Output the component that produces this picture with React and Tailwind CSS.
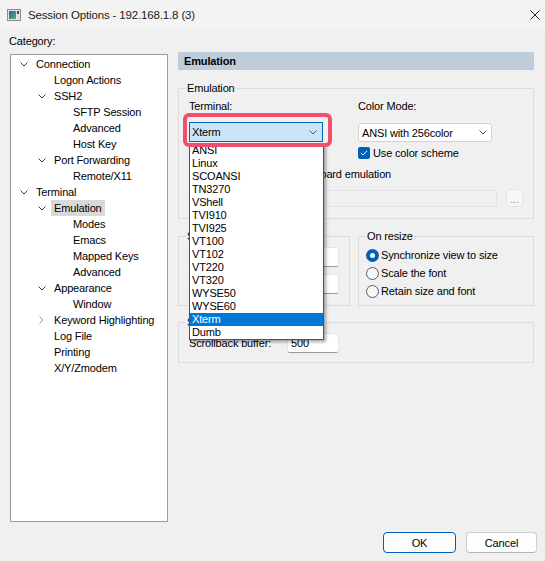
import React from "react";

const tree = [
  { t: "Connection", l: 0, c: "down" },
  { t: "Logon Actions", l: 1 },
  { t: "SSH2", l: 1, c: "down" },
  { t: "SFTP Session", l: 2 },
  { t: "Advanced", l: 2 },
  { t: "Host Key", l: 2 },
  { t: "Port Forwarding", l: 1, c: "down" },
  { t: "Remote/X11", l: 2 },
  { t: "Terminal", l: 0, c: "down" },
  { t: "Emulation", l: 1, c: "down", sel: true },
  { t: "Modes", l: 2 },
  { t: "Emacs", l: 2 },
  { t: "Mapped Keys", l: 2 },
  { t: "Advanced", l: 2 },
  { t: "Appearance", l: 1, c: "down" },
  { t: "Window", l: 2 },
  { t: "Keyword Highlighting", l: 1, c: "right" },
  { t: "Log File", l: 1 },
  { t: "Printing", l: 1 },
  { t: "X/Y/Zmodem", l: 1 },
];

const indent = ["w-0", "w-[18px]", "w-[37px]"];

const terms = [
  "ANSI", "Linux", "SCOANSI", "TN3270", "VShell", "TVI910", "TVI925", "VT100",
  "VT102", "VT220", "VT320", "WYSE50", "WYSE60", "Xterm", "Dumb",
];

function ChevDown({ color = "#444" }) {
  return (
    <svg width="8" height="5" viewBox="0 0 8 5" className="block">
      <path d="M0.5 0.5 L4 4 L7.5 0.5" stroke={color} strokeWidth="1" fill="none" />
    </svg>
  );
}

function ChevRight() {
  return (
    <svg width="5" height="8" viewBox="0 0 5 8" className="block">
      <path d="M0.5 0.5 L4 4 L0.5 7.5" stroke="#9a9a9a" strokeWidth="1" fill="none" />
    </svg>
  );
}

function Check() {
  return (
    <div className="w-[12px] h-[12px] rounded-[2px] bg-[#005fb8] flex items-center justify-center">
      <svg width="8" height="6" viewBox="0 0 8 6">
        <path d="M0.8 3 L3 5 L7.2 0.8" stroke="#fff" strokeWidth="1" fill="none" />
      </svg>
    </div>
  );
}

function Radio({ on }) {
  return on ? (
    <div className="w-[13px] h-[13px] rounded-full bg-[#005fb8] flex items-center justify-center">
      <div className="w-[5px] h-[5px] rounded-full bg-white" />
    </div>
  ) : (
    <div className="w-[13px] h-[13px] rounded-full border border-[#5c5c5c] bg-[#f7f7f7]" />
  );
}

function Input({ value }) {
  return (
    <div className="w-[52px] h-[20px] bg-white border border-[#e5e5e5] border-b-[#9a9a9a] rounded-[3px] pl-[3px] leading-[18px]">
      {value}
    </div>
  );
}

export default function App() {
  return (
    <div className="w-[545px] h-[561px] bg-[#f0f0f0] text-black text-[11px] leading-[14px] tracking-[-0.15px] font-['Liberation_Sans',Arial,sans-serif] overflow-hidden">
      {/* Title bar */}
      <div className="h-[30px] bg-[#f3f3f3] flex items-center pl-[7px] pr-[5px]">
        <svg width="14" height="12" viewBox="0 0 14 12" className="block">
          <defs>
            <linearGradient id="g" x1="0" y1="0" x2="1" y2="1">
              <stop offset="0" stopColor="#2a5f98" />
              <stop offset="1" stopColor="#5cb07a" />
            </linearGradient>
          </defs>
          <rect x="0.5" y="0.5" width="13" height="11" fill="#e4e4e4" stroke="#8c8c8c" />
          <rect x="2" y="2" width="7" height="8" fill="url(#g)" />
          <rect x="10" y="2" width="2" height="3" fill="#4a4a4a" />
        </svg>
        <div className="ml-[7px] text-[11.5px] text-[#1b1b1b]">Session Options - 192.168.1.8 (3)</div>
        <div className="ml-auto w-[10px] h-[10px]">
          <svg width="10" height="10" viewBox="0 0 10 10" className="block">
            <path d="M0.5 0.5 L9.5 9.5 M9.5 0.5 L0.5 9.5" stroke="#222" strokeWidth="1" />
          </svg>
        </div>
      </div>

      {/* Body */}
      <div className="pt-[4px] flex">
        {/* Left column */}
        <div className="ml-[10px] w-[158px] flex flex-col">
          <div className="h-[14px] -ml-[1px]">Category:</div>
          <div className="mt-[6px] h-[468px] bg-white border border-[#9c9c9c] pt-[1px]">
            {tree.map((r, i) => (
              <div key={i} className="flex items-center h-[16px]">
                <div className={`${indent[r.l]} shrink-0`} />
                <div className="w-[22px] shrink-0 flex items-center">
                  {r.c === "down" && (
                    <div className="ml-[9px]">
                      <ChevDown color="#3a3a3a" />
                    </div>
                  )}
                  {r.c === "right" && (
                    <div className="ml-[10px]">
                      <ChevRight />
                    </div>
                  )}
                </div>
                <div className={`px-[3px] leading-[16px] whitespace-nowrap ${r.sel ? "bg-[#d9d9d9]" : ""}`}>{r.t}</div>
              </div>
            ))}
          </div>
        </div>

        {/* Right column */}
        <div className="ml-[10px] w-[356px] pt-[18px] flex flex-col">
          <div className="h-[18px] bg-[#bfcddb] pl-[6px] leading-[18px] font-bold">Emulation</div>

          {/* Emulation group */}
          <fieldset className="mt-[11px] border border-[#dcdcdc] pl-[10px] pb-[11px] min-w-0">
            <legend className="-ml-[3px] px-[1px] leading-[14px]">Emulation</legend>
            <div className="flex mt-[4px]">
              <div className="w-[169px] flex flex-col">
                <div className="h-[14px]">Terminal:</div>
                <div className="relative mt-[9px] w-[134px] h-[20px] z-10">
                  <div className="w-full h-full bg-[#cce4f7] border border-[#0067c0] flex items-center justify-between pl-[2px] pr-[5px]">
                    <span>Xterm</span>
                    <ChevDown color="#555" />
                  </div>
                  {/* dropdown list */}
                  <div className="absolute left-0 top-[21px] w-[135px] bg-white border border-[#1e5ea8] shadow-[2px_2px_3px_rgba(0,0,0,0.35)]">
                    {terms.map((t) => (
                      <div
                        key={t}
                        className={`h-[13px] leading-[13px] pl-[2px] ${t === "Xterm" ? "bg-[#0078d7] text-white" : ""}`}
                      >
                        {t}
                      </div>
                    ))}
                  </div>
                  {/* annotation ring */}
                  <div className="absolute -left-[6px] -top-[9px] w-[149px] h-[34px] border-[4px] border-[#f0506e] rounded-[6px]" />
                </div>
              </div>
              <div className="flex flex-col">
                <div className="h-[14px]">Color Mode:</div>
                <div className="mt-[10px] w-[134px] h-[19px] bg-white border border-[#d2d2d2] rounded-[3px] flex items-center justify-between pl-[3px] pr-[4px]">
                  <span>ANSI with 256color</span>
                  <ChevDown color="#555" />
                </div>
                <div className="mt-[5px] h-[12px] flex items-center">
                  <Check />
                  <span className="ml-[3px]">Use color scheme</span>
                </div>
              </div>
            </div>
            <div className="mt-[8px] h-[14px] flex items-center">
              <div className="w-[13px] h-[13px] rounded-[2px] border border-[#5c5c5c] bg-[#f7f7f7]" />
              <span className="ml-[4px]">Select an alternate keyboard emulation</span>
            </div>
            <div className="mt-[8px] flex items-center">
              <div className="ml-[1px] w-[307px] h-[17px] border border-[#e3e3e3] bg-[#f0f0f0]" />
              <div className="ml-[9px] w-[17px] h-[18px] border border-[#e4e4e4] bg-[#f7f7f7] rounded-[3px] text-[#8a8a8a] flex items-end justify-center leading-[14px]">
                ...
              </div>
            </div>
          </fieldset>

          {/* Size + On resize */}
          <div className="mt-[10px] flex gap-[8px]">
            <fieldset className="w-[172px] h-[77px] border border-[#dcdcdc] pl-[10px] min-w-0">
              <legend className="-ml-[3px] px-[1px] leading-[14px]">Size</legend>
              <div className="mt-[4px] h-[20px] flex items-center">
                <span className="w-[98px]">Logical rows:</span>
                <Input value="24" />
              </div>
              <div className="mt-[7px] h-[20px] flex items-center">
                <span className="w-[98px]">Logical columns:</span>
                <Input value="80" />
              </div>
            </fieldset>
            <fieldset className="w-[176px] h-[77px] border border-[#dcdcdc] pl-[7px] min-w-0">
              <legend className="ml-0 px-[1px] leading-[14px]">On resize</legend>
              <div className="mt-[3px] flex flex-col">
                <div className="h-[18px] flex items-center">
                  <Radio on />
                  <span className="ml-[2px]">Synchronize view to size</span>
                </div>
                <div className="h-[18px] flex items-center">
                  <Radio />
                  <span className="ml-[2px]">Scale the font</span>
                </div>
                <div className="h-[18px] flex items-center">
                  <Radio />
                  <span className="ml-[2px]">Retain size and font</span>
                </div>
              </div>
            </fieldset>
          </div>

          {/* Scrollback */}
          <fieldset className="mt-[9px] h-[48px] border border-[#dcdcdc] pl-[10px] min-w-0">
            <legend className="-ml-[3px] px-[1px] leading-[14px]">Scrollback</legend>
            <div className="mt-[4px] h-[20px] flex items-center">
              <span className="w-[98px]">Scrollback buffer:</span>
              <Input value="500" />
            </div>
          </fieldset>
        </div>
      </div>

      {/* Buttons */}
      <div className="mt-[10px] flex justify-end gap-[10px] pr-[8px]">
        <div className="w-[73px] h-[21px] border border-[#005fb8] rounded-[4px] bg-[#fdfdfd] flex items-center justify-center">OK</div>
        <div className="w-[71px] h-[21px] border border-[#d0d0d0] border-b-[#b5b5b5] rounded-[4px] bg-[#fdfdfd] flex items-center justify-center">Cancel</div>
      </div>
    </div>
  );
}
